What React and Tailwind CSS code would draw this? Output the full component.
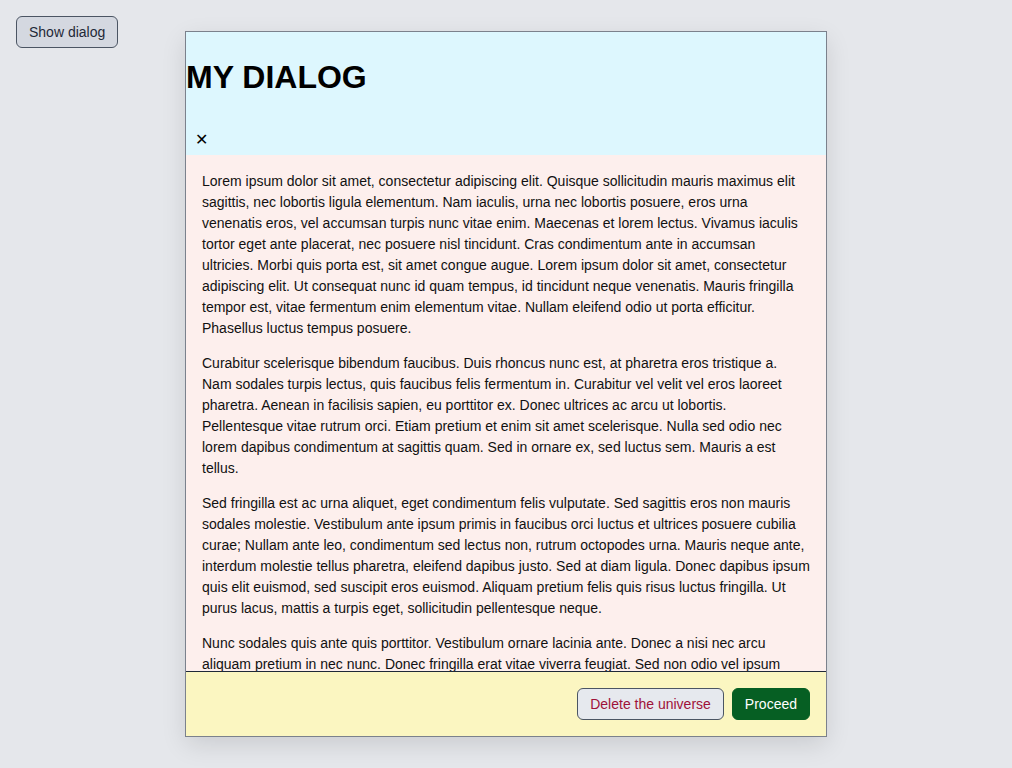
import React from "react";

const paragraphs = [
  "Lorem ipsum dolor sit amet, consectetur adipiscing elit. Quisque sollicitudin mauris maximus elit sagittis, nec lobortis ligula elementum. Nam iaculis, urna nec lobortis posuere, eros urna venenatis eros, vel accumsan turpis nunc vitae enim. Maecenas et lorem lectus. Vivamus iaculis tortor eget ante placerat, nec posuere nisl tincidunt. Cras condimentum ante in accumsan ultricies. Morbi quis porta est, sit amet congue augue. Lorem ipsum dolor sit amet, consectetur adipiscing elit. Ut consequat nunc id quam tempus, id tincidunt neque venenatis. Mauris fringilla tempor est, vitae fermentum enim elementum vitae. Nullam eleifend odio ut porta efficitur. Phasellus luctus tempus posuere.",
  "Curabitur scelerisque bibendum faucibus. Duis rhoncus nunc est, at pharetra eros tristique a. Nam sodales turpis lectus, quis faucibus felis fermentum in. Curabitur vel velit vel eros laoreet pharetra. Aenean in facilisis sapien, eu porttitor ex. Donec ultrices ac arcu ut lobortis. Pellentesque vitae rutrum orci. Etiam pretium et enim sit amet scelerisque. Nulla sed odio nec lorem dapibus condimentum at sagittis quam. Sed in ornare ex, sed luctus sem. Mauris a est tellus.",
  "Sed fringilla est ac urna aliquet, eget condimentum felis vulputate. Sed sagittis eros non mauris sodales molestie. Vestibulum ante ipsum primis in faucibus orci luctus et ultrices posuere cubilia curae; Nullam ante leo, condimentum sed lectus non, rutrum octopodes urna. Mauris neque ante, interdum molestie tellus pharetra, eleifend dapibus justo. Sed at diam ligula. Donec dapibus ipsum quis elit euismod, sed suscipit eros euismod. Aliquam pretium felis quis risus luctus fringilla. Ut purus lacus, mattis a turpis eget, sollicitudin pellentesque neque.",
  "Nunc sodales quis ante quis porttitor. Vestibulum ornare lacinia ante. Donec a nisi nec arcu aliquam pretium in nec nunc. Donec fringilla erat vitae viverra feugiat. Sed non odio vel ipsum dapibus tempus. Integer malesuada, nisi at tincidunt porta, libero lacus aliquet odio, in tempor augue ex a mauris.",
];

export default function App() {
  return (
    <div className="min-h-[768px] bg-[#e5e7eb] font-['Liberation_Sans',Arial,sans-serif] text-[#111] relative">
      <div className="p-4">
        <button className="h-8 px-3 rounded-md border border-[#4b5563] bg-[#d4d8e0] text-sm text-[#1f2937]">
          Show dialog
        </button>
      </div>

      {/* dialog */}
      <div className="absolute left-[186px] top-[32px] w-[640px] h-[704px] flex flex-col ring-1 ring-[#7b818c] shadow-[0_8px_24px_rgba(0,0,0,0.12)] overflow-hidden">
        <div className="h-[123px] shrink-0 bg-[#ddf7fe] flex flex-col">
          <h1 className="mt-[21px] text-[32px] leading-[48px] font-bold text-black">MY DIALOG</h1>
          <div className="mt-[27px]">
            <button className="pl-[9px] text-base leading-6 text-black">✕</button>
          </div>
        </div>
        <div className="flex-1 bg-[#fdefed] overflow-hidden px-4 pt-4">
          {paragraphs.map((p, i) => (
            <p key={i} className="text-sm leading-[21px] mb-[14px]">
              {p}
            </p>
          ))}
        </div>
        <div className="h-[65px] shrink-0 border-t border-[#1f2937] bg-[#fbf6c1] flex items-center justify-end gap-2 px-4">
          <button className="h-8 px-3 rounded-md border border-[#4b5563] bg-[#e6e9ee] text-sm text-[#9f1239]">
            Delete the universe
          </button>
          <button className="h-8 px-3 rounded-md border border-[#065f23] bg-[#065f23] text-sm text-white">
            Proceed
          </button>
        </div>
      </div>
    </div>
  );
}
